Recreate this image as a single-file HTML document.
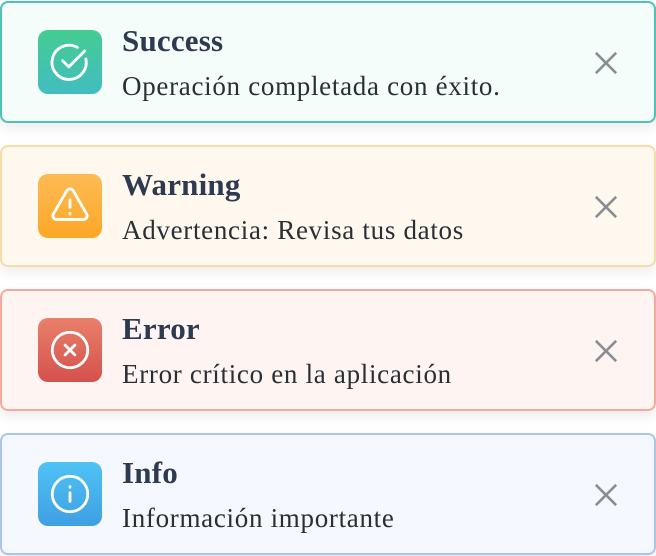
<!DOCTYPE html>
<html><head><meta charset="utf-8"><style>
body{margin:0;width:656px;height:556px;background:#fff;font-family:"Liberation Serif",serif;overflow:hidden;position:relative}
.c{position:absolute;left:0;width:652px;height:118px;border:2px solid;border-radius:8px;box-shadow:0 6px 12px rgba(0,0,0,0.07)}
.ic{position:absolute;left:36px;top:27px;width:64px;height:64px;border-radius:10px}
.ic svg{position:absolute;left:10px;top:10px}
.t{position:absolute;left:120px;top:20px;font-size:31px;font-weight:bold;color:#2d3a4f;letter-spacing:0.2px}
.m{position:absolute;left:120px;top:68px;font-size:27px;color:#2a2e35;white-space:nowrap;letter-spacing:0.7px}
.x{position:absolute;left:592px;top:48px}
</style></head><body>
<div class="c" style="top:1px;border-color:#4fc2b3;background:#f5fdfa">
<div class="ic" style="background:linear-gradient(#44cc92,#42bdc0)"><svg width="44" height="44" viewBox="0 0 36 36" fill="none" stroke="#fff" stroke-width="2.3" stroke-linecap="round" stroke-linejoin="round"><path d="M31 15.5A14 14 0 1 1 24 6"/><path d="M12 17l5 5 13-13"/></svg></div>
<div class="t">Success</div><div class="m">Operación completada con éxito.</div>
<svg class="x" width="24" height="24" viewBox="0 0 26 26" stroke="#8a8d93" stroke-width="2.8"><path d="M2 2L24 24M24 2L2 24"/></svg></div>
<div class="c" style="top:145px;border-color:#f7dca6;background:#fff8ee">
<div class="ic" style="background:linear-gradient(#fdbb55,#fca726)"><svg width="44" height="44" viewBox="0 0 36 36" fill="none" stroke="#fff" stroke-width="2.3" stroke-linecap="round" stroke-linejoin="round"><path d="M15.4 5.5a3 3 0 0 1 5.2 0l11 19a3 3 0 0 1-2.6 4.5H7a3 3 0 0 1-2.6-4.5z"/><path d="M18 13v6M18 24v.5"/></svg></div>
<div class="t">Warning</div><div class="m">Advertencia: Revisa tus datos</div>
<svg class="x" width="24" height="24" viewBox="0 0 26 26" stroke="#8a8d93" stroke-width="2.8"><path d="M2 2L24 24M24 2L2 24"/></svg></div>
<div class="c" style="top:289px;border-color:#f3aa9b;background:#fef5f2">
<div class="ic" style="background:linear-gradient(#e9806b,#d4514c)"><svg width="44" height="44" viewBox="0 0 36 36" fill="none" stroke="#fff" stroke-width="2.3" stroke-linecap="round"><circle cx="18" cy="18" r="14.5"/><path d="M14 14l8 8M22 14l-8 8"/></svg></div>
<div class="t">Error</div><div class="m">Error crítico en la aplicación</div>
<svg class="x" width="24" height="24" viewBox="0 0 26 26" stroke="#8a8d93" stroke-width="2.8"><path d="M2 2L24 24M24 2L2 24"/></svg></div>
<div class="c" style="top:433px;border-color:#a9c5ec;background:#f5f8fe">
<div class="ic" style="background:linear-gradient(#4fc3f5,#3f9fe3)"><svg width="44" height="44" viewBox="0 0 36 36" fill="none" stroke="#fff" stroke-width="2.3" stroke-linecap="round"><circle cx="18" cy="18" r="14.5"/><path d="M18 17v7M18 12v.5"/></svg></div>
<div class="t">Info</div><div class="m">Información importante</div>
<svg class="x" width="24" height="24" viewBox="0 0 26 26" stroke="#8a8d93" stroke-width="2.8"><path d="M2 2L24 24M24 2L2 24"/></svg></div>
</body></html>
